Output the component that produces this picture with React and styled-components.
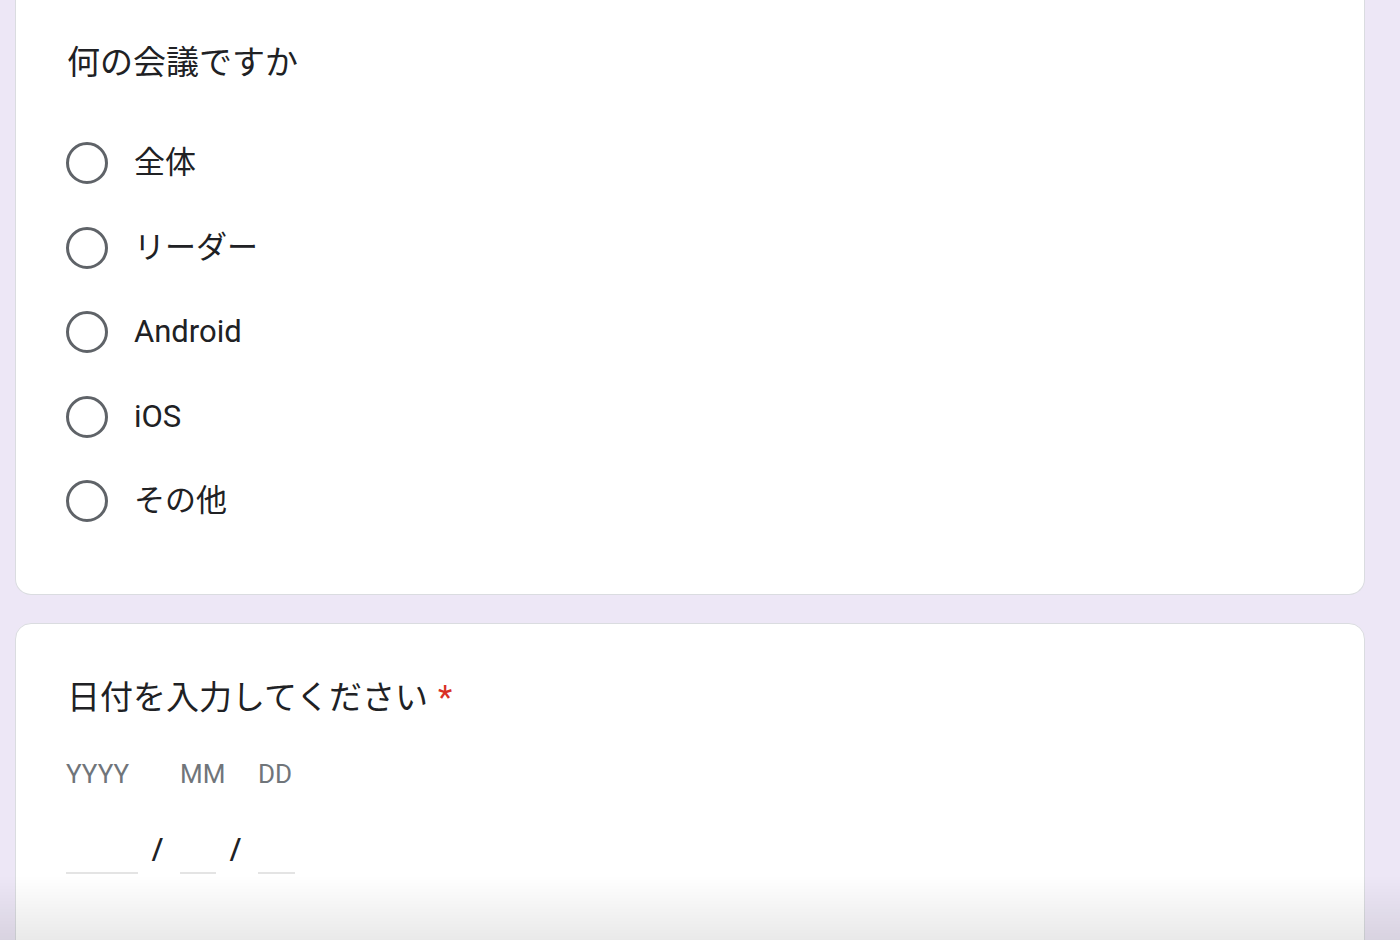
import React from 'react';
import styled, { createGlobalStyle } from 'styled-components';

const GlobalStyle = createGlobalStyle`
  html, body {
    margin: 0;
    padding: 0;
    background: #ede7f6;
    overflow: hidden;
  }
  body {
    font-family: Roboto, "Noto Sans CJK JP", "Noto Sans", sans-serif;
    color: #202124;
  }
`;

const options = ['全体', 'リーダー', 'Android', 'iOS', 'その他'];

const App = () => {
  return (
    <Page>
      <GlobalStyle />
      <Card cut>
        <QuestionTitle>何の会議ですか</QuestionTitle>
        <OptionList>
          {options.map((opt) => (
            <OptionRow key={opt}>
              <Radio />
              <OptionLabel>{opt}</OptionLabel>
            </OptionRow>
          ))}
        </OptionList>
      </Card>
      <Card>
        <QuestionTitle>
          日付を入力してください<Required>*</Required>
        </QuestionTitle>
        <DateGrid>
          <DateLabel>YYYY</DateLabel>
          <span />
          <DateLabel>MM</DateLabel>
          <span />
          <DateLabel>DD</DateLabel>
          <DateInput />
          <Slash>/</Slash>
          <DateInput />
          <Slash>/</Slash>
          <DateInput />
        </DateGrid>
      </Card>
      <BottomFade />
    </Page>
  );
};

export default App;

const Page = styled.div`
  padding: 0 35px 0 15px;
  min-height: 940px;
`;

const Card = styled.section`
  background: #fff;
  border: 1px solid #dadce0;
  border-radius: 16px;
  padding: 54px 50px 200px;
  margin-top: 28px;
  ${({ cut }) =>
    cut &&
    `
    border-top: none;
    border-top-left-radius: 0;
    border-top-right-radius: 0;
    margin-top: 0;
    padding: 43px 50px 50px;
  `}
`;

const QuestionTitle = styled.h2`
  margin: 0 0 0 1px;
  font-size: 33px;
  line-height: 40px;
  font-weight: 400;
  color: #202124;
`;

const Required = styled.span`
  color: #d93025;
  margin-left: 10px;
  font-family: Roboto, sans-serif;
`;

const OptionList = styled.ul`
  list-style: none;
  margin: 38px 0 0;
  padding: 0;
`;

const OptionRow = styled.li`
  display: flex;
  align-items: center;
  height: 84.5px;
`;

const Radio = styled.span`
  box-sizing: border-box;
  width: 42px;
  height: 42px;
  border: 3.5px solid #5f6368;
  border-radius: 50%;
  flex-shrink: 0;
`;

const OptionLabel = styled.span`
  margin-left: 26px;
  font-size: 31px;
  line-height: 40px;
  color: #202124;
`;

const DateGrid = styled.div`
  display: grid;
  grid-template-columns: 72px 42px 36px 42px 37px;
  grid-template-rows: 30px 44px;
  row-gap: 41px;
  margin-top: 41px;
`;

const DateLabel = styled.span`
  font-size: 26px;
  line-height: 30px;
  color: #70757a;
  white-space: nowrap;
`;

const DateInput = styled.span`
  border-bottom: 2px solid #e4e4e4;
`;

const Slash = styled.span`
  display: flex;
  justify-content: center;
  align-items: center;
  font-size: 30px;
  font-weight: 500;
  padding: 0 3px 6px 0;
  color: #202124;
`;

const BottomFade = styled.div`
  position: fixed;
  left: 0;
  right: 0;
  bottom: 0;
  height: 64px;
  background: linear-gradient(to bottom, rgba(0, 0, 0, 0), rgba(0, 0, 0, 0.085));
  pointer-events: none;
`;
